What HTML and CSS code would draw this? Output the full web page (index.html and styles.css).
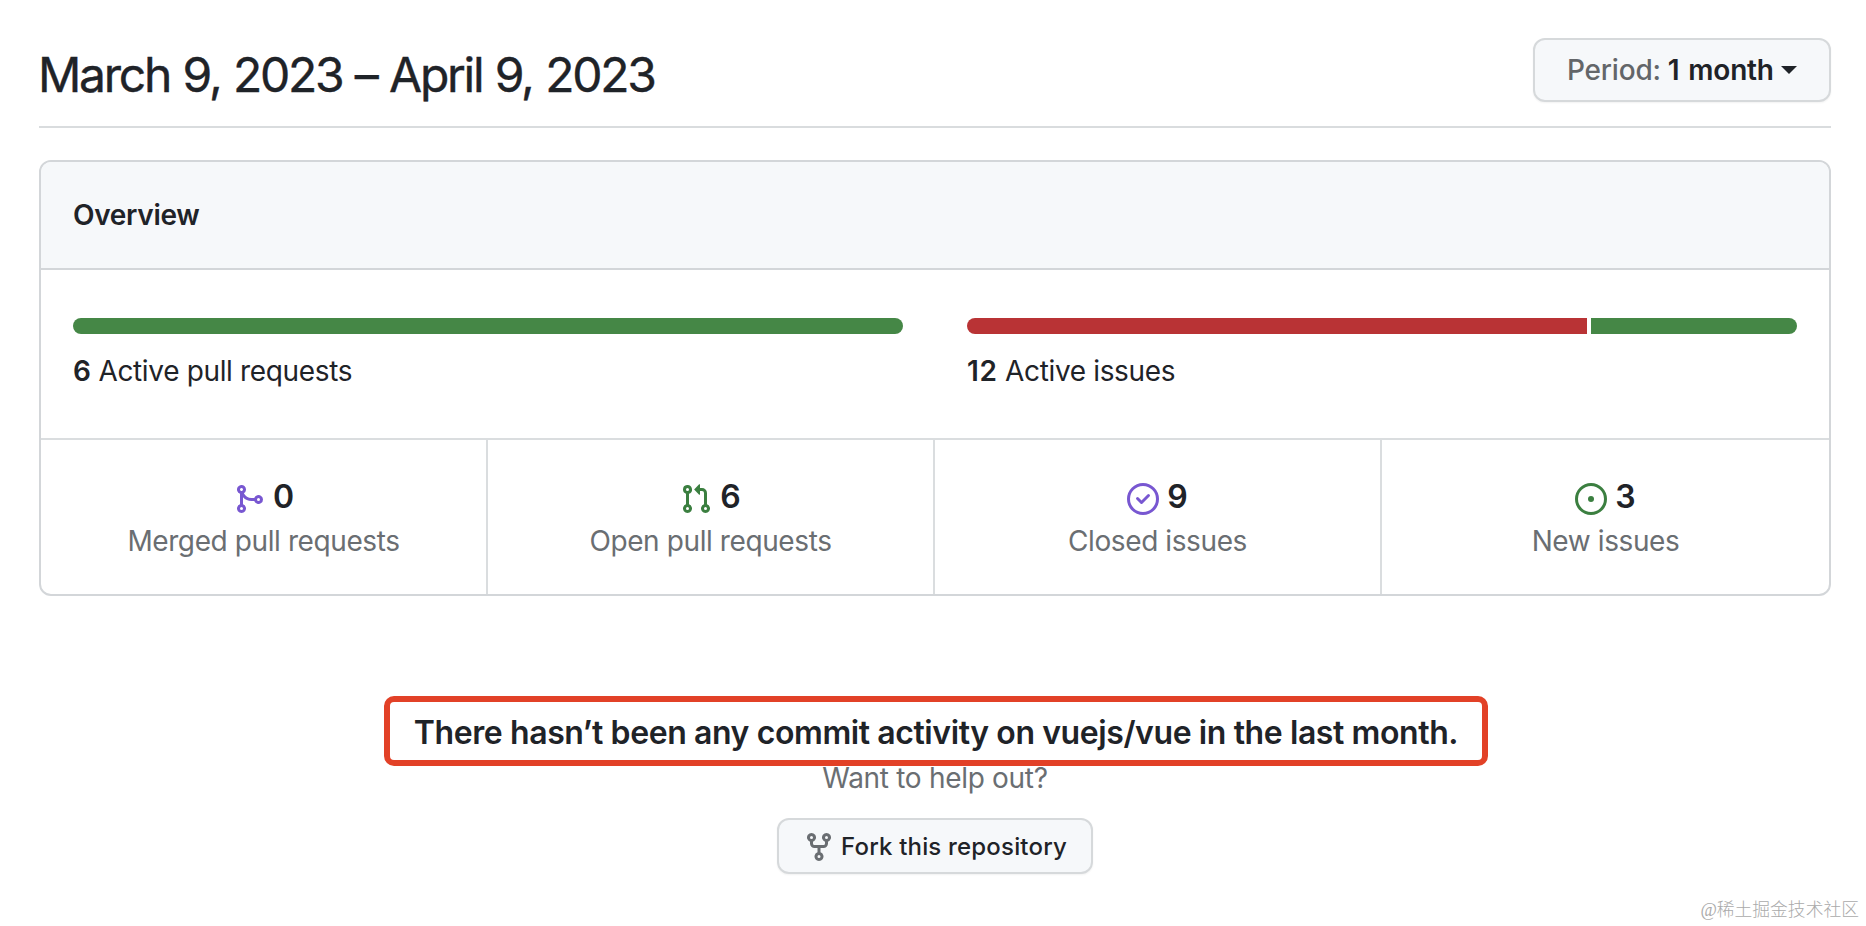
FILE: index.html
```
<!DOCTYPE html>
<html lang="en">
<head>
<meta charset="utf-8">
<title>Pulse</title>
<link rel="stylesheet" href="styles.css">
</head>
<body>
<main class="pulse">
  <header class="subhead">
    <h1 class="title">March 9, 2023 – April 9, 2023</h1>
    <button class="period"><span class="period-label">Period:</span><span class="period-value">1 month</span><i class="caret"></i></button>
  </header>
  <section class="box">
    <h2 class="box-header">Overview</h2>
    <div class="summary">
      <div class="summary-col">
        <div class="bar"><span class="green"></span></div>
        <p class="summary-text"><b>6</b> Active pull requests</p>
      </div>
      <div class="summary-col">
        <div class="bar"><span class="red"></span><span class="green"></span></div>
        <p class="summary-text"><b class="wide">12</b> Active issues</p>
      </div>
    </div>
    <ul class="stats">
      <li class="stat">
        <div class="count"><svg class="icon purple" viewBox="0 0 16 16"><path fill-rule="evenodd" d="M5 3.254V3.25v.005a.75.75 0 110-.005v.004zm.45 1.9a2.25 2.25 0 10-1.95.218v5.256a2.25 2.25 0 101.5 0V7.123A5.735 5.735 0 009.25 9h1.378a2.25 2.25 0 100-1.5H9.25a4.25 4.25 0 01-3.8-2.346zM12.75 9a.75.75 0 100-1.5.75.75 0 000 1.5zm-8.5 4.5a.75.75 0 100-1.5.75.75 0 000 1.5z"/></svg><span>0</span></div>
        <div class="label">Merged pull requests</div>
      </li>
      <li class="stat">
        <div class="count"><svg class="icon open" viewBox="0 0 16 16"><path fill-rule="evenodd" d="M7.177 3.073L9.573.677A.25.25 0 0110 .854v4.792a.25.25 0 01-.427.177L7.177 3.427a.25.25 0 010-.354zM3.75 2.5a.75.75 0 100 1.5.75.75 0 000-1.5zm-2.25.75a2.25 2.25 0 113 2.122v5.256a2.251 2.251 0 11-1.5 0V5.372A2.25 2.25 0 011.5 3.25zM11 2.5h-1V4h1a1 1 0 011 1v5.628a2.251 2.251 0 101.5 0V5A2.5 2.5 0 0011 2.5zm1 10.25a.75.75 0 111.5 0 .75.75 0 01-1.5 0zM3.75 12a.75.75 0 100 1.5.75.75 0 000-1.5z"/></svg><span>6</span></div>
        <div class="label">Open pull requests</div>
      </li>
      <li class="stat">
        <div class="count"><svg class="icon purple" viewBox="0 0 16 16"><path d="M11.28 6.78a.75.75 0 00-1.06-1.06L7.25 8.69 5.78 7.22a.75.75 0 00-1.06 1.06l2 2a.75.75 0 001.06 0l3.5-3.5z"/><path fill-rule="evenodd" d="M16 8A8 8 0 110 8a8 8 0 0116 0zm-1.5 0a6.5 6.5 0 11-13 0 6.5 6.5 0 0113 0z"/></svg><span>9</span></div>
        <div class="label">Closed issues</div>
      </li>
      <li class="stat">
        <div class="count"><svg class="icon open" viewBox="0 0 16 16"><path d="M8 9.5a1.5 1.5 0 100-3 1.5 1.5 0 000 3z"/><path fill-rule="evenodd" d="M8 0a8 8 0 100 16A8 8 0 008 0zM1.5 8a6.5 6.5 0 1113 0 6.5 6.5 0 01-13 0z"/></svg><span>3</span></div>
        <div class="label">New issues</div>
      </li>
    </ul>
  </section>
  <section class="blank">
    <h3 class="callout">There hasn’t been any commit activity on vuejs/vue in the last month.</h3>
    <p class="help">Want to help out?</p>
    <button class="fork"><svg class="icon" viewBox="0 0 16 16"><path fill-rule="evenodd" d="M5 3.25a.75.75 0 11-1.5 0 .75.75 0 011.5 0zm0 2.122a2.25 2.25 0 10-1.5 0v.878A2.25 2.25 0 005.75 8.5h1.5v2.128a2.251 2.251 0 101.5 0V8.5h1.5a2.25 2.25 0 002.25-2.25v-.878a2.25 2.25 0 10-1.5 0v.878a.75.75 0 01-.75.75h-4.5A.75.75 0 015 6.25v-.878zm3.75 7.378a.75.75 0 11-1.5 0 .75.75 0 011.5 0zm3-8.75a.75.75 0 100-1.5.75.75 0 000 1.5z"/></svg>Fork this repository</button>
  </section>
</main>
<div class="watermark">@稀土掘金技术社区</div>
</body>
</html>
```
FILE: styles.css
```
* { box-sizing: border-box; margin: 0; padding: 0; }
body {
  position: relative;
  height: 926px;
  overflow: hidden;
  background: #fff;
  color: #1f2328;
  font: 400 28px/42px Inter, "Noto Sans CJK SC", sans-serif;
}
.pulse { width: 1792px; margin-left: 39px; }
.subhead {
  display: flex;
  justify-content: space-between;
  height: 128px;
  padding-top: 38px;
  border-bottom: 2px solid #d9dcde;
}
.title { margin-left: -1px; font-size: 48px; font-weight: 400; line-height: 74px; letter-spacing: -2.25px; word-spacing: 1.2px; -webkit-text-stroke: 0.4px currentColor; }
button { font-family: inherit; color: #1f2328; background: #f6f8fa; border: 2px solid #d6d9db; border-radius: 12px; box-shadow: 0 1px 2px rgba(31, 35, 40, 0.06); }
.period {
  display: flex;
  align-items: center;
  width: 298px;
  height: 64px;
  padding-left: 32px;
  font-size: 28px;
  font-weight: 500;
}
.period-label { color: #636669; letter-spacing: -0.2px; }
.period-value { margin-left: 7px; font-weight: 600; letter-spacing: -0.2px; word-spacing: 2px; }
.caret { width: 16px; margin-left: 7px; border: 8px solid transparent; border-top-color: #1f2328; border-bottom: 0; }
.box { margin-top: 32px; height: 436px; border: 2px solid #d3d6d9; border-radius: 12px; overflow: hidden; }
.box-header { height: 108px; padding: 32px; border-bottom: 2px solid #d3d6d9; background: #f6f8fa; font-size: 28px; font-weight: 600; letter-spacing: -0.3px; }
.summary { display: flex; height: 168px; padding: 48px 32px 0; gap: 64px; }
.summary-col { flex: 1; }
.bar { display: flex; gap: 4px; height: 16px; border-radius: 8px; overflow: hidden; }
.green { flex: 1; background: #458746; }
.red { width: 620px; background: #b93335; }
.summary-text { margin-top: 16px; letter-spacing: -0.35px; }
b { font-weight: 600; letter-spacing: 0; }
.wide { letter-spacing: 0.6px; }
.stats { display: flex; height: 156px; border-top: 2px solid #dadddf; list-style: none; }
.stat { width: 447px; padding-top: 32px; border-right: 2px solid #dadddf; text-align: center; }
.stat:last-child { border-right: 0; }
.count { display: flex; justify-content: center; align-items: center; gap: 8px; height: 50px; font-size: 32px; font-weight: 600; }
.icon { width: 32px; height: 32px; fill: currentColor; }
.count .icon { margin-top: 4px; }
.purple { color: #7857d1; }
.open { color: #3b7f40; }
.label { line-height: 38px; color: #6a6e72; letter-spacing: -0.4px; }
.blank { display: flex; flex-direction: column; align-items: center; padding-top: 100px; }
.callout { width: 1104px; height: 70px; margin-left: 2px; border: 6px solid #e24127; border-radius: 10px; text-align: center; font-size: 32px; font-weight: 600; line-height: 62px; letter-spacing: -0.41px; white-space: nowrap; }
.help { margin-top: -9px; color: #6a6e72; letter-spacing: -0.3px; }
.fork { display: flex; align-items: center; width: 316px; height: 56px; margin-top: 19px; padding-left: 24px; font-size: 24px; font-weight: 500; letter-spacing: 0.18px; }
.fork .icon { margin-top: 2px; margin-right: 6px; color: #6a6e72; }
.watermark { position: absolute; right: 7px; bottom: 3px; color: #aaa; font: 300 17.8px/26px "Liberation Serif", "Noto Sans CJK SC", serif; }
```
